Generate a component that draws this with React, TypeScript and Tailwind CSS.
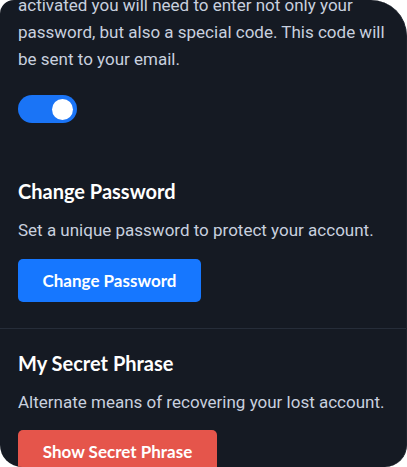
import { useState } from 'react';

const body = "font-['Roboto',_'Liberation_Sans',_sans-serif]";
const head = "font-['Lato',_'Noto_Sans',_sans-serif]";

export default function App() {
  const [enabled, setEnabled] = useState(true);

  return (
    <div className="w-[407px] h-[467px] bg-white overflow-hidden">
      <div className="h-full bg-[#151a23] rounded-tl-[14px] rounded-tr-[36px] rounded-b-[22px] overflow-hidden border-r border-[#1b212b]">
        {/* Two-factor section (scrolled) */}
        <div className="px-[18px]">
          <p className={`${body} -mt-[8px] text-[17px] leading-[27px] text-[#c8d0df]`}>
            activated you will need to enter not only your password, but also a special code. This code will be sent to your email.
          </p>
          <button
            onClick={() => setEnabled((v) => !v)}
            className={`mt-[22px] w-[59px] h-[28px] rounded-full flex items-center px-[4px] ${
              enabled ? 'bg-[#1a74f6] justify-end' : 'bg-[#3a4250] justify-start'
            }`}
          >
            <span className="w-[21px] h-[21px] rounded-full bg-white" />
          </button>
        </div>

        {/* Change Password */}
        <div className="px-[18px] pt-[55px] pb-[26px] border-b border-[#262d39]">
          <h2 className={`${head} text-[20px] font-bold leading-[26px] text-white`}>Change Password</h2>
          <p className={`${body} mt-[14px] text-[17px] leading-[24px] text-[#c8d0df]`}>
            Set a unique password to protect your account.
          </p>
          <button
            className={`${head} mt-[17px] w-[183px] h-[43px] rounded-[5px] bg-[#1677ff] text-white text-[17px] font-bold`}
          >
            Change Password
          </button>
        </div>

        {/* My Secret Phrase */}
        <div className="px-[18px] pt-[21px]">
          <h2 className={`${head} text-[20px] font-bold leading-[26px] text-white`}>My Secret Phrase</h2>
          <p className={`${body} mt-[14px] text-[17px] leading-[24px] text-[#c8d0df]`}>
            Alternate means of recovering your lost account.
          </p>
          <button
            className={`${head} mt-[16px] w-[199px] h-[43px] rounded-[5px] bg-[#e5554b] text-white text-[17px] font-bold`}
          >
            Show Secret Phrase
          </button>
        </div>
      </div>
    </div>
  );
}
